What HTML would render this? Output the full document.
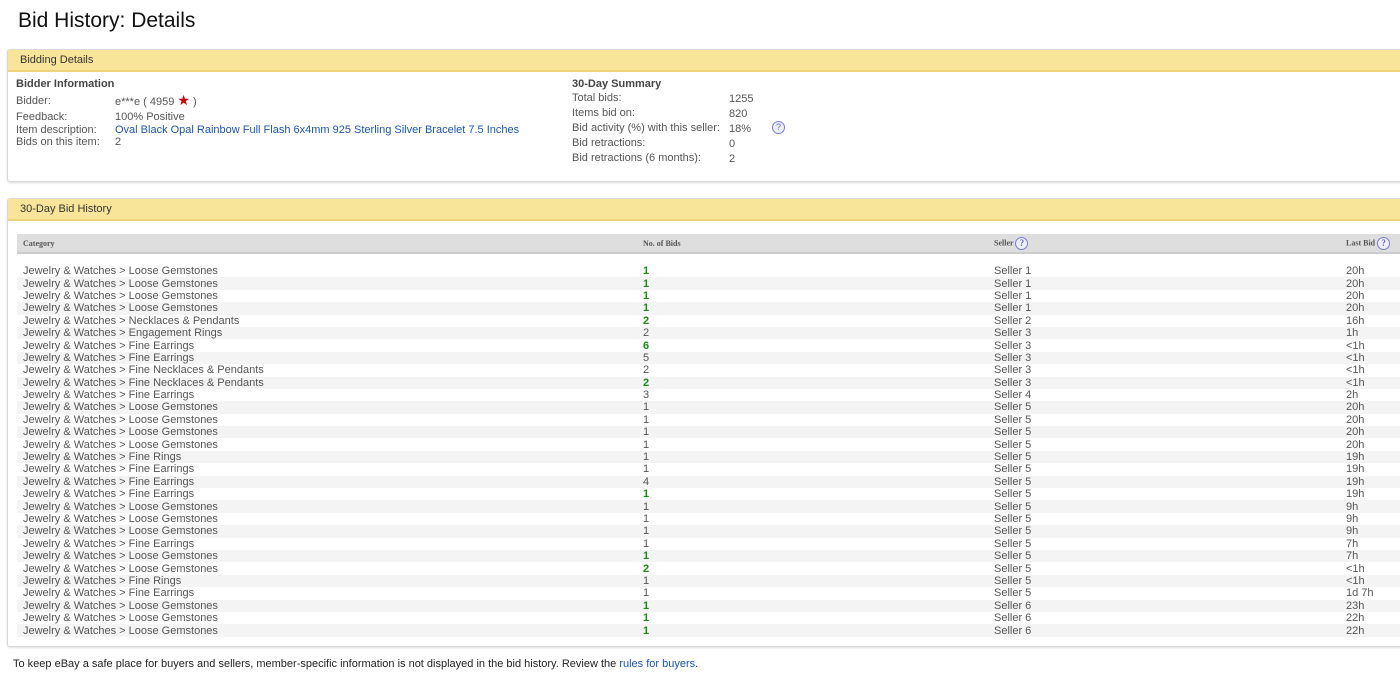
<!DOCTYPE html>
<html><head><style>
body{margin:0;width:1400px;height:680px;overflow:hidden;background:#fff;font-family:"Liberation Sans",Arial,sans-serif;color:#333;position:relative}
h1{position:absolute;left:18px;top:9px;margin:0;font-size:21px;font-weight:normal;color:#111}
.panel{position:absolute;left:7px;width:1420px;border:1px solid #d8d8d8;border-radius:3px;box-shadow:0 1px 2px #ddd}
.ph{background:#f8e59a;border-bottom:2px solid #ecd27a;height:20px;font-size:11px;line-height:20px;padding-left:12px;color:#333}
.t{position:absolute;font-size:11px;line-height:12px;color:#555;white-space:nowrap}
.b{font-weight:bold;color:#444}
a{color:#1a55b8;text-decoration:none}
.q{display:inline-block;width:11px;height:11px;border:1px solid #7a7ae0;border-radius:50%;font-size:9px;line-height:11px;text-align:center;color:#6a6ad0;background:#eef;vertical-align:middle}
table{position:absolute;left:9px;top:35px;width:1400px;border-collapse:collapse;font-size:11px;color:#555}
th{background:#dedede;border-bottom:2px solid #ccc;height:18px;font-family:"Liberation Serif",serif;font-size:8px;text-align:left;font-weight:bold;color:#555;padding:0 0 0 6px}
td{height:12.4px;line-height:12px;padding:0 0 0 6px}
tr.sp td{height:11px}
tbody tr:nth-child(odd):not(.sp) td{background:#f4f4f4}
.g{color:#1a8a1a;font-weight:bold}
</style></head><body>
<h1>Bid History: Details</h1>
<div class="panel" style="top:49px;height:131px">
<div class="ph">Bidding Details</div>
<div class="t b" style="left:8px;top:28px">Bidder Information</div>
<div class="t" style="left:8px;top:45px">Bidder:</div><div class="t" style="left:107px;top:44px">e***e ( 4959 <span style="color:#c00;font-size:14px">★</span> )</div>
<div class="t" style="left:8px;top:61px">Feedback:</div><div class="t" style="left:107px;top:61px">100% Positive</div>
<div class="t" style="left:8px;top:74px">Item description:</div><div class="t" style="left:107px;top:74px"><a>Oval Black Opal Rainbow Full Flash 6x4mm 925 Sterling Silver Bracelet 7.5 Inches</a></div>
<div class="t" style="left:8px;top:86px">Bids on this item:</div><div class="t" style="left:107px;top:86px">2</div>
<div class="t b" style="left:564px;top:28px">30-Day Summary</div>
<div class="t" style="left:564px;top:42px">Total bids:</div><div class="t" style="left:721px;top:43px">1255</div>
<div class="t" style="left:564px;top:57px">Items bid on:</div><div class="t" style="left:721px;top:58px">820</div>
<div class="t" style="left:564px;top:72px">Bid activity (%) with this seller:</div><div class="t" style="left:721px;top:73px">18%</div><div class="t" style="left:764px;top:71px"><span class="q">?</span></div>
<div class="t" style="left:564px;top:87px">Bid retractions:</div><div class="t" style="left:721px;top:88px">0</div>
<div class="t" style="left:564px;top:102px">Bid retractions (6 months):</div><div class="t" style="left:721px;top:103px">2</div>
</div>
<div class="panel" style="top:198px;height:447px">
<div class="ph">30-Day Bid History</div>
<table>
<thead><tr><th style="width:614px">Category</th><th style="width:345px">No. of Bids</th><th style="width:346px">Seller <span class="q">?</span></th><th>Last Bid <span class="q">?</span></th></tr></thead>
<tbody>
<tr class="sp"><td colspan="4"></td></tr>
<tr><td>Jewelry &amp; Watches &gt; Loose Gemstones</td><td class="g">1</td><td>Seller 1</td><td>20h</td></tr>
<tr><td>Jewelry &amp; Watches &gt; Loose Gemstones</td><td class="g">1</td><td>Seller 1</td><td>20h</td></tr>
<tr><td>Jewelry &amp; Watches &gt; Loose Gemstones</td><td class="g">1</td><td>Seller 1</td><td>20h</td></tr>
<tr><td>Jewelry &amp; Watches &gt; Loose Gemstones</td><td class="g">1</td><td>Seller 1</td><td>20h</td></tr>
<tr><td>Jewelry &amp; Watches &gt; Necklaces &amp; Pendants</td><td class="g">2</td><td>Seller 2</td><td>16h</td></tr>
<tr><td>Jewelry &amp; Watches &gt; Engagement Rings</td><td>2</td><td>Seller 3</td><td>1h</td></tr>
<tr><td>Jewelry &amp; Watches &gt; Fine Earrings</td><td class="g">6</td><td>Seller 3</td><td>&lt;1h</td></tr>
<tr><td>Jewelry &amp; Watches &gt; Fine Earrings</td><td>5</td><td>Seller 3</td><td>&lt;1h</td></tr>
<tr><td>Jewelry &amp; Watches &gt; Fine Necklaces &amp; Pendants</td><td>2</td><td>Seller 3</td><td>&lt;1h</td></tr>
<tr><td>Jewelry &amp; Watches &gt; Fine Necklaces &amp; Pendants</td><td class="g">2</td><td>Seller 3</td><td>&lt;1h</td></tr>
<tr><td>Jewelry &amp; Watches &gt; Fine Earrings</td><td>3</td><td>Seller 4</td><td>2h</td></tr>
<tr><td>Jewelry &amp; Watches &gt; Loose Gemstones</td><td>1</td><td>Seller 5</td><td>20h</td></tr>
<tr><td>Jewelry &amp; Watches &gt; Loose Gemstones</td><td>1</td><td>Seller 5</td><td>20h</td></tr>
<tr><td>Jewelry &amp; Watches &gt; Loose Gemstones</td><td>1</td><td>Seller 5</td><td>20h</td></tr>
<tr><td>Jewelry &amp; Watches &gt; Loose Gemstones</td><td>1</td><td>Seller 5</td><td>20h</td></tr>
<tr><td>Jewelry &amp; Watches &gt; Fine Rings</td><td>1</td><td>Seller 5</td><td>19h</td></tr>
<tr><td>Jewelry &amp; Watches &gt; Fine Earrings</td><td>1</td><td>Seller 5</td><td>19h</td></tr>
<tr><td>Jewelry &amp; Watches &gt; Fine Earrings</td><td>4</td><td>Seller 5</td><td>19h</td></tr>
<tr><td>Jewelry &amp; Watches &gt; Fine Earrings</td><td class="g">1</td><td>Seller 5</td><td>19h</td></tr>
<tr><td>Jewelry &amp; Watches &gt; Loose Gemstones</td><td>1</td><td>Seller 5</td><td>9h</td></tr>
<tr><td>Jewelry &amp; Watches &gt; Loose Gemstones</td><td>1</td><td>Seller 5</td><td>9h</td></tr>
<tr><td>Jewelry &amp; Watches &gt; Loose Gemstones</td><td>1</td><td>Seller 5</td><td>9h</td></tr>
<tr><td>Jewelry &amp; Watches &gt; Fine Earrings</td><td>1</td><td>Seller 5</td><td>7h</td></tr>
<tr><td>Jewelry &amp; Watches &gt; Loose Gemstones</td><td class="g">1</td><td>Seller 5</td><td>7h</td></tr>
<tr><td>Jewelry &amp; Watches &gt; Loose Gemstones</td><td class="g">2</td><td>Seller 5</td><td>&lt;1h</td></tr>
<tr><td>Jewelry &amp; Watches &gt; Fine Rings</td><td>1</td><td>Seller 5</td><td>&lt;1h</td></tr>
<tr><td>Jewelry &amp; Watches &gt; Fine Earrings</td><td>1</td><td>Seller 5</td><td>1d 7h</td></tr>
<tr><td>Jewelry &amp; Watches &gt; Loose Gemstones</td><td class="g">1</td><td>Seller 6</td><td>23h</td></tr>
<tr><td>Jewelry &amp; Watches &gt; Loose Gemstones</td><td class="g">1</td><td>Seller 6</td><td>22h</td></tr>
<tr><td>Jewelry &amp; Watches &gt; Loose Gemstones</td><td class="g">1</td><td>Seller 6</td><td>22h</td></tr>
</tbody></table>
</div>
<div class="t" style="left:13px;top:658px;color:#222">To keep eBay a safe place for buyers and sellers, member-specific information is not displayed in the bid history. Review the <a>rules for buyers</a>.</div>
</body></html>
